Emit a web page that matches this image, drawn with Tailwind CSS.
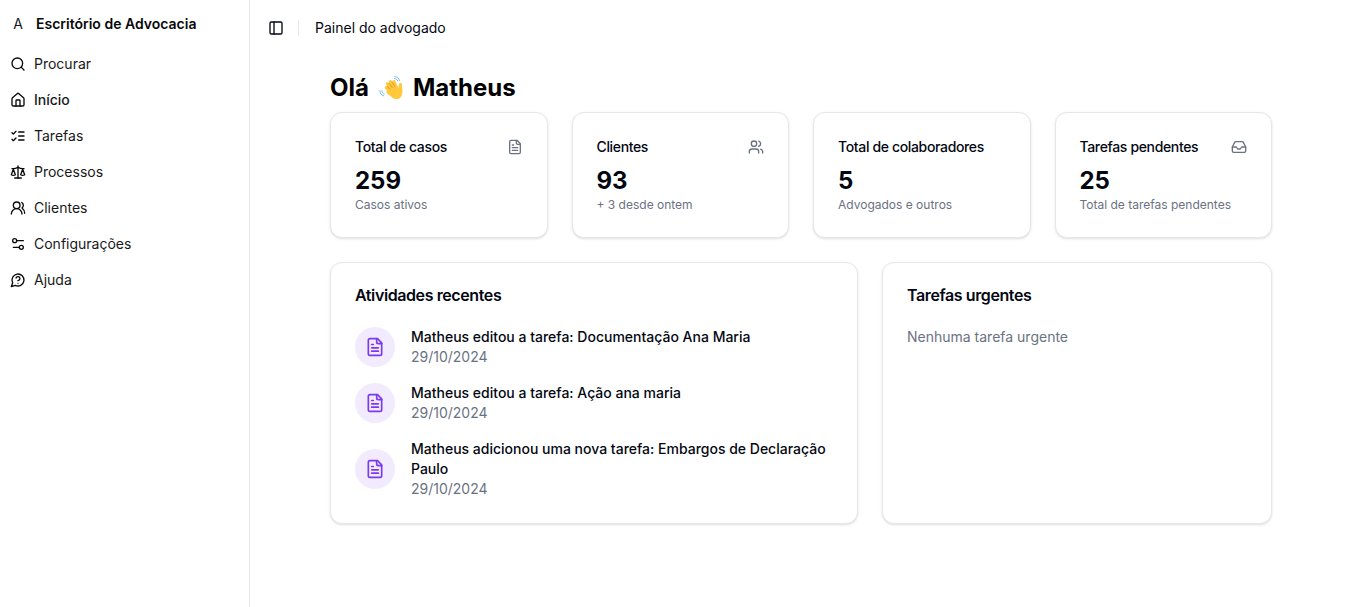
<!DOCTYPE html>
<html lang="pt-BR">

<head>
    <meta charset="UTF-8">
    <title>Painel do advogado</title>
    <meta name="viewport" content="width=device-width, initial-scale=1.0">
    <script src="https://cdn.jsdelivr.net/npm/@tailwindcss/browser@4"></script>
</head>

<body class="font-['Inter',sans-serif] bg-white text-gray-950">
    <!-- icons used more than once -->
    <svg class="hidden" xmlns="http://www.w3.org/2000/svg">
        <symbol id="file-text" viewBox="0 0 24 24">
            <path d="M15 2H6a2 2 0 0 0-2 2v16a2 2 0 0 0 2 2h12a2 2 0 0 0 2-2V7Z" />
            <path d="M14 2v4a2 2 0 0 0 2 2h4" />
            <path d="M10 9H8" />
            <path d="M16 13H8" />
            <path d="M16 17H8" />
        </symbol>
    </svg>

    <div class="flex min-h-screen">
        <aside class="w-[250px] shrink-0 border-r border-gray-200 p-2 px-0.5 text-sm text-zinc-900">
            <div class="flex h-8 items-center px-2">
                <span class="w-4 text-center">A</span>
                <span class="ml-2.5 font-semibold text-zinc-950">Escritório de Advocacia</span>
            </div>
            <nav class="mt-2 flex flex-col gap-1">
                <a href="#" class="flex h-8 items-center gap-2 rounded-md px-2 hover:bg-zinc-100">
                    <svg class="size-4 shrink-0 text-zinc-950" fill="none" stroke="currentColor" stroke-width="2" stroke-linecap="round"
                        stroke-linejoin="round" viewBox="0 0 24 24">
                        <circle cx="11" cy="11" r="8" />
                        <path d="m21 21-4.3-4.3" />
                    </svg>
                    <span>Procurar</span>
                </a>
                <a href="#" class="flex h-8 items-center gap-2 rounded-md px-2 font-medium hover:bg-zinc-100">
                    <svg class="size-4 shrink-0 text-zinc-950" fill="none" stroke="currentColor" stroke-width="2" stroke-linecap="round"
                        stroke-linejoin="round" viewBox="0 0 24 24">
                        <path d="M15 21v-8a1 1 0 0 0-1-1h-4a1 1 0 0 0-1 1v8" />
                        <path
                            d="M3 10a2 2 0 0 1 .709-1.528l7-5.999a2 2 0 0 1 2.582 0l7 5.999A2 2 0 0 1 21 10v9a2 2 0 0 1-2 2H5a2 2 0 0 1-2-2z" />
                    </svg>
                    <span>Início</span>
                </a>
                <a href="#" class="flex h-8 items-center gap-2 rounded-md px-2 hover:bg-zinc-100">
                    <svg class="size-4 shrink-0 text-zinc-950" fill="none" stroke="currentColor" stroke-width="2" stroke-linecap="round"
                        stroke-linejoin="round" viewBox="0 0 24 24">
                        <path d="m3 17 2 2 4-4" />
                        <path d="m3 7 2 2 4-4" />
                        <path d="M13 6h8" />
                        <path d="M13 12h8" />
                        <path d="M13 18h8" />
                    </svg>
                    <span>Tarefas</span>
                </a>
                <a href="#" class="flex h-8 items-center gap-2 rounded-md px-2 hover:bg-zinc-100">
                    <svg class="size-4 shrink-0 text-zinc-950" fill="none" stroke="currentColor" stroke-width="2" stroke-linecap="round"
                        stroke-linejoin="round" viewBox="0 0 24 24">
                        <path d="m16 16 3-8 3 8c-.87.65-1.92 1-3 1s-2.13-.35-3-1Z" />
                        <path d="m2 16 3-8 3 8c-.87.65-1.92 1-3 1s-2.13-.35-3-1Z" />
                        <path d="M7 21h10" />
                        <path d="M12 3v18" />
                        <path d="M3 7h2c2 0 5-1 7-2 2 1 5 2 7 2h2" />
                    </svg>
                    <span>Processos</span>
                </a>
                <a href="#" class="flex h-8 items-center gap-2 rounded-md px-2 hover:bg-zinc-100">
                    <svg class="size-4 shrink-0 text-zinc-950" fill="none" stroke="currentColor" stroke-width="2" stroke-linecap="round"
                        stroke-linejoin="round" viewBox="0 0 24 24">
                        <path d="M18 21a8 8 0 0 0-16 0" />
                        <circle cx="10" cy="8" r="5" />
                        <path d="M22 20c0-3.37-2-6.5-4-8a5 5 0 0 0-.45-8.3" />
                    </svg>
                    <span>Clientes</span>
                </a>
                <a href="#" class="flex h-8 items-center gap-2 rounded-md px-2 hover:bg-zinc-100">
                    <svg class="size-4 shrink-0 text-zinc-950" fill="none" stroke="currentColor" stroke-width="2" stroke-linecap="round"
                        stroke-linejoin="round" viewBox="0 0 24 24">
                        <path d="M20 7h-9" />
                        <path d="M14 17H5" />
                        <circle cx="17" cy="17" r="3" />
                        <circle cx="7" cy="7" r="3" />
                    </svg>
                    <span>Configurações</span>
                </a>
                <a href="#" class="flex h-8 items-center gap-2 rounded-md px-2 hover:bg-zinc-100">
                    <svg class="size-4 shrink-0 text-zinc-950" fill="none" stroke="currentColor" stroke-width="2" stroke-linecap="round"
                        stroke-linejoin="round" viewBox="0 0 24 24">
                        <path d="M7.9 20A9 9 0 1 0 4 16.1L2 22Z" />
                        <path d="M9.09 9a3 3 0 0 1 5.83 1c0 2-3 3-3 3" />
                        <path d="M12 17h.01" />
                    </svg>
                    <span>Ajuda</span>
                </a>
            </nav>
        </aside>

        <div class="min-w-0 flex-1">
            <header class="flex h-14 items-center px-3">
                <button type="button" aria-label="Alternar menu"
                    class="flex size-7 items-center justify-center rounded-md hover:bg-gray-100">
                    <svg class="size-4" fill="none" stroke="currentColor" stroke-width="2" stroke-linecap="round"
                        stroke-linejoin="round" viewBox="0 0 24 24">
                        <rect width="18" height="18" x="3" y="3" rx="2" />
                        <path d="M9 3v18" />
                    </svg>
                </button>
                <div class="mr-4 ml-2 h-4 w-px bg-gray-200"></div>
                <span class="text-sm">Painel do advogado</span>
            </header>

            <main class="pt-4 pr-19 pb-8 pl-20">
                <h1 class="flex items-center gap-2.5 text-2xl font-bold text-black">
                    Olá
                    <svg class="size-6" viewBox="0 0 28 28" role="img" aria-label="Aceno">
                        <g fill="none" stroke="#ffc83d" stroke-width="3.8" stroke-linecap="round">
                            <path d="M14 19 8.6 13.6" />
                            <path d="M15 16 9.8 9.2" />
                            <path d="M17 14 13.2 6.6" />
                            <path d="M20 13 17.4 6.6" />
                            <path d="M24 17 25.2 10" />
                        </g>
                        <path fill="#ffc83d"
                            d="M9.5 14.5 19.5 8.8 22.5 13.6 26.6 12.5C27.8 16 27.8 20.2 26.2 23.2 24.2 27.4 18.8 28 15.4 25.2L8.6 19.4Z" />
                        <g fill="none" stroke="#d99115" stroke-width="1" stroke-linecap="round">
                            <path d="m9.6 12.2 3.4 3.4" />
                            <path d="m11.8 8.6 3.6 5" />
                            <path d="m15.4 7.2 2.8 4.8" />
                        </g>
                        <g fill="none" stroke="#6db8f7" stroke-width="1.1" stroke-linecap="round">
                            <path d="M17.8 3c2-.2 3.4.9 4 2.8" />
                            <path d="M18.4.8c2.8 0 4.9 1.6 5.5 4.4" />
                            <path d="M3.5 17.4c-.2 1.7.9 3.2 2.7 3.6" />
                            <path d="M1.1 17c-.3 3 1.5 5.5 4.3 6.1" />
                        </g>
                    </svg>
                    Matheus
                </h1>

                <div class="mt-2 grid grid-cols-4 gap-6">
                    <div class="rounded-xl border border-gray-200 bg-white p-6 shadow-sm">
                        <div class="flex items-center justify-between pb-2">
                            <h3 class="text-sm font-medium tracking-tight">Total de casos</h3>
                            <svg class="size-4 text-gray-500" fill="none" stroke="currentColor" stroke-width="2"
                                stroke-linecap="round" stroke-linejoin="round">
                                <use href="#file-text" />
                            </svg>
                        </div>
                        <div class="text-2xl font-bold">259</div>
                        <p class="text-xs text-gray-500">Casos ativos</p>
                    </div>
                    <div class="rounded-xl border border-gray-200 bg-white p-6 shadow-sm">
                        <div class="flex items-center justify-between pb-2">
                            <h3 class="text-sm font-medium tracking-tight">Clientes</h3>
                            <svg class="size-4 text-gray-500" fill="none" stroke="currentColor" stroke-width="2"
                                stroke-linecap="round" stroke-linejoin="round" viewBox="0 0 24 24">
                                <path d="M16 21v-2a4 4 0 0 0-4-4H6a4 4 0 0 0-4 4v2" />
                                <circle cx="9" cy="7" r="4" />
                                <path d="M22 21v-2a4 4 0 0 0-3-3.87" />
                                <path d="M16 3.13a4 4 0 0 1 0 7.75" />
                            </svg>
                        </div>
                        <div class="text-2xl font-bold">93</div>
                        <p class="text-xs text-gray-500">+ 3 desde ontem</p>
                    </div>
                    <div class="rounded-xl border border-gray-200 bg-white p-6 shadow-sm">
                        <div class="flex items-center justify-between pb-2">
                            <h3 class="text-sm font-medium tracking-tight">Total de colaboradores</h3>
                        </div>
                        <div class="text-2xl font-bold">5</div>
                        <p class="text-xs text-gray-500">Advogados e outros</p>
                    </div>
                    <div class="rounded-xl border border-gray-200 bg-white p-6 shadow-sm">
                        <div class="flex items-center justify-between pb-2">
                            <h3 class="text-sm font-medium tracking-tight">Tarefas pendentes</h3>
                            <svg class="size-4 text-gray-500" fill="none" stroke="currentColor" stroke-width="2"
                                stroke-linecap="round" stroke-linejoin="round" viewBox="0 0 24 24">
                                <path d="M22 12h-6l-2 3h-4l-2-3H2" />
                                <path
                                    d="M5.45 5.11 2 12v6a2 2 0 0 0 2 2h16a2 2 0 0 0 2-2v-6l-3.45-6.89A2 2 0 0 0 16.76 4H7.24a2 2 0 0 0-1.79 1.11z" />
                            </svg>
                        </div>
                        <div class="text-2xl font-bold">25</div>
                        <p class="text-xs text-gray-500">Total de tarefas pendentes</p>
                    </div>
                </div>

                <div class="mt-6 grid grid-cols-7 gap-6">
                    <section class="col-span-4 rounded-xl border border-gray-200 bg-white p-6 shadow-sm">
                        <h2 class="text-base leading-none font-semibold tracking-tight">Atividades recentes</h2>
                        <ul class="mt-6 flex flex-col gap-4 text-sm">
                            <li class="flex items-center gap-4">
                                <div class="flex size-10 shrink-0 items-center justify-center rounded-full bg-[#7c3aed]/10">
                                    <svg class="size-5 text-[#7c3aed]" fill="none" stroke="currentColor"
                                        stroke-width="2" stroke-linecap="round" stroke-linejoin="round">
                                        <use href="#file-text" />
                                    </svg>
                                </div>
                                <div>
                                    <p class="font-medium">Matheus editou a tarefa: Documentação Ana Maria</p>
                                    <p class="text-gray-500">29/10/2024</p>
                                </div>
                            </li>
                            <li class="flex items-center gap-4">
                                <div class="flex size-10 shrink-0 items-center justify-center rounded-full bg-[#7c3aed]/10">
                                    <svg class="size-5 text-[#7c3aed]" fill="none" stroke="currentColor"
                                        stroke-width="2" stroke-linecap="round" stroke-linejoin="round">
                                        <use href="#file-text" />
                                    </svg>
                                </div>
                                <div>
                                    <p class="font-medium">Matheus editou a tarefa: Ação ana maria</p>
                                    <p class="text-gray-500">29/10/2024</p>
                                </div>
                            </li>
                            <li class="flex items-center gap-4">
                                <div class="flex size-10 shrink-0 items-center justify-center rounded-full bg-[#7c3aed]/10">
                                    <svg class="size-5 text-[#7c3aed]" fill="none" stroke="currentColor"
                                        stroke-width="2" stroke-linecap="round" stroke-linejoin="round">
                                        <use href="#file-text" />
                                    </svg>
                                </div>
                                <div>
                                    <p class="font-medium">Matheus adicionou uma nova tarefa: Embargos de Declaração Paulo</p>
                                    <p class="text-gray-500">29/10/2024</p>
                                </div>
                            </li>
                        </ul>
                    </section>
                    <section class="col-span-3 rounded-xl border border-gray-200 bg-white p-6 shadow-sm">
                        <h2 class="text-base leading-none font-semibold tracking-tight">Tarefas urgentes</h2>
                        <p class="mt-6 text-sm text-gray-500">Nenhuma tarefa urgente</p>
                    </section>
                </div>
            </main>
        </div>
    </div>
</body>

</html>
